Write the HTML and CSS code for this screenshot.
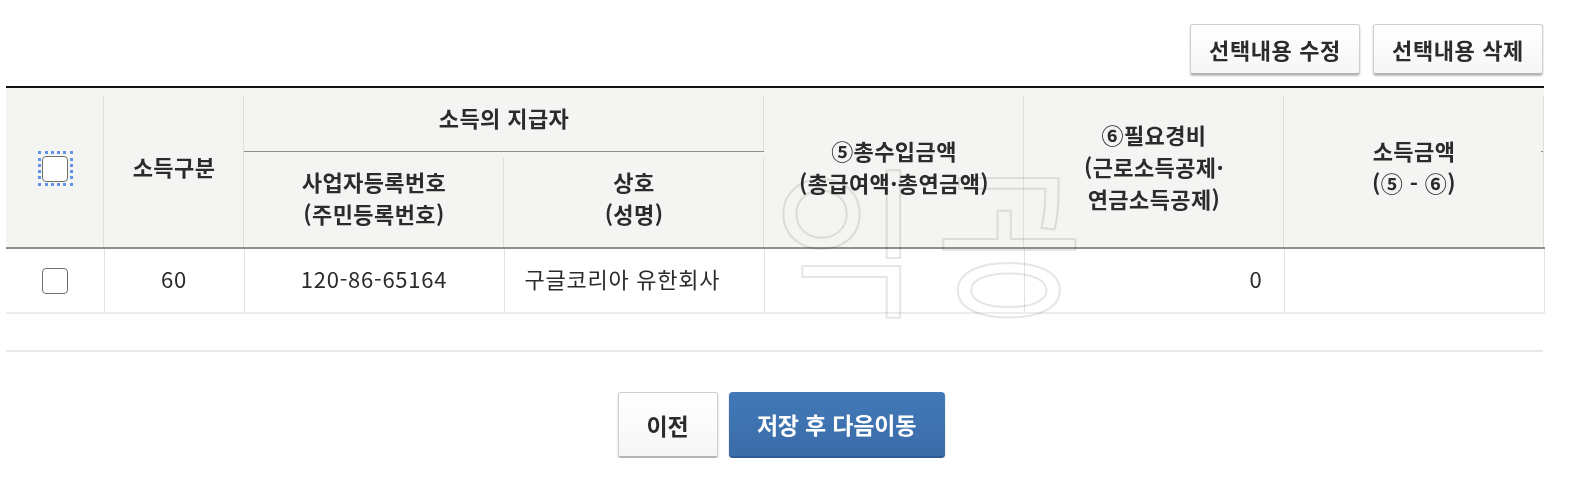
FILE: index.html
```html
<!DOCTYPE html>
<html lang="ko">
  <head>
    <meta charset="UTF-8" />
    <title>소득 지급명세</title>
    <link rel="stylesheet" href="styles.css">
  </head>
  <body>
    <div class="toolbar">
      <button class="btn btn-small">선택내용 수정</button>
      <button class="btn btn-small">선택내용 삭제</button>
    </div>

    <div class="table-wrap">
      <table class="income-table">
        <colgroup>
          <col class="col-check" />
          <col class="col-type" />
          <col class="col-wide" />
          <col class="col-wide" />
          <col class="col-wide" />
          <col class="col-wide" />
          <col class="col-wide" />
        </colgroup>
        <thead>
          <tr class="head-top">
            <th rowspan="2"><span class="check check-focus"></span></th>
            <th rowspan="2">소득구분</th>
            <th colspan="2" class="payer">소득의 지급자</th>
            <th rowspan="2">⑤총수입금액<br />(총급여액·총연금액)</th>
            <th rowspan="2">⑥필요경비<br />(근로소득공제·<br />연금소득공제)</th>
            <th rowspan="2" class="last">소득금액<br />(⑤ - ⑥)</th>
          </tr>
          <tr class="head-sub">
            <th>사업자등록번호<br />(주민등록번호)</th>
            <th>상호<br />(성명)</th>
          </tr>
        </thead>
        <tbody>
          <tr>
            <td><span class="check"></span></td>
            <td>60</td>
            <td>120-86-65164</td>
            <td class="name">구글코리아 유한회사</td>
            <td></td>
            <td class="num">0</td>
            <td></td>
          </tr>
        </tbody>
      </table>
      <div class="watermark" aria-hidden="true">익공</div>
    </div>

    <hr class="divider" />

    <div class="actions">
      <button class="btn btn-large">이전</button>
      <button class="btn btn-large btn-primary">저장 후 다음이동</button>
    </div>
  </body>
</html>
```

FILE: styles.css
```css
* {
  box-sizing: border-box;
  font-family: "Noto Sans CJK KR", "Noto Sans", sans-serif;
}

body {
  margin: 0;
  padding: 24px 27px 0 6px;
  background: #fff;
  color: #2b2b2b;
}

/* buttons */
.btn {
  border: 1px solid #cfcfcf;
  border-bottom: 2px solid #b5b5b5;
  border-radius: 3px;
  background: linear-gradient(#fff, #f6f6f6);
  box-shadow: 0 1px 2px rgba(0, 0, 0, 0.25);
  color: #2b2b2b;
  font-weight: 700;
  cursor: pointer;
  padding: 0;
}

.btn-small {
  width: 170px;
  height: 51px;
  font-size: 22px;
  letter-spacing: 0.6px;
}

.btn-large {
  width: 100px;
  height: 66px;
  font-size: 23px;
  letter-spacing: -0.2px;
}

.btn-primary {
  width: 216px;
  border: none;
  border-bottom: 2px solid #2b5a94;
  border-radius: 4px;
  background: linear-gradient(#4379b8, #3a6ca8);
  color: #fff;
}

.toolbar {
  display: flex;
  justify-content: flex-end;
  gap: 13px;
  height: 62px;
}

/* table */
.table-wrap {
  position: relative;
}

.income-table {
  width: 1537px;
  table-layout: fixed;
  border-collapse: collapse;
  border-top: 2px solid #111;
}

.col-check { width: 98px; }
.col-type { width: 140px; }
.col-wide { width: 260px; }

.income-table th {
  background-color: #f4f4f2;
  background-image: linear-gradient(#dddddb, #dddddb);
  background-repeat: no-repeat;
  background-position: right bottom;
  background-size: 1px calc(100% - 8px);
  font-size: 22px;
  font-weight: 700;
  line-height: 32px;
  padding: 0 0 4px;
  text-align: center;
  letter-spacing: 0.4px;
}

/* the short stub of the sub-header rule on the far right */
.income-table th.last {
  background-image: linear-gradient(#dddddb, #dddddb), linear-gradient(#8c8c8a, #8c8c8a);
  background-position: right bottom, right 63px;
  background-size: 1px calc(100% - 8px), 3px 1px;
}

.head-top {
  height: 64px;
}

.head-sub {
  height: 97px;
}

.income-table .head-sub th {
  background-size: 1px calc(100% - 6px);
}

.income-table .payer {
  border-bottom: 1px solid #8c8c8a;
  padding-bottom: 4px;
}

thead {
  border-bottom: 2px solid #8f8f8d;
}

.income-table td {
  height: 65px;
  border-right: 1px solid #e2e2e2;
  border-bottom: 2px solid #ececec;
  font-size: 22px;
  letter-spacing: 0.75px;
  text-align: center;
  padding: 0 0 5px;
}

.income-table td.name {
  text-align: left;
  padding-left: 20px;
}

.income-table td.num {
  text-align: right;
  padding-right: 21px;
}

/* checkboxes */
.check {
  display: block;
  width: 26px;
  height: 26px;
  margin: 5px auto 0;
  border: 1.5px solid #6f6f6f;
  border-radius: 4px;
  background: #fff;
}

.check-focus {
  position: relative;
  margin-top: 6px;
}

/* square focus ring, outline would follow the box's rounded corners */
.check-focus::after {
  content: "";
  position: absolute;
  inset: -5.5px;
  border: 3px dotted #5f94e6;
}

/* faint stamp over the table, multiplied so the text stays dark */
.watermark {
  position: absolute;
  left: 766px;
  top: 68px;
  font-size: 162px;
  line-height: 1;
  letter-spacing: 14px;
  color: transparent;
  -webkit-text-stroke: 2px #e6e6e4;
  mix-blend-mode: multiply;
  pointer-events: none;
}

.divider {
  width: 1537px;
  margin: 36px 0 0;
  border: 0;
  border-top: 2px solid #e8e8e8;
}

.actions {
  display: flex;
  justify-content: center;
  gap: 11px;
  width: 1537px;
  margin-top: 40px;
  padding-left: 13px;
}
```
